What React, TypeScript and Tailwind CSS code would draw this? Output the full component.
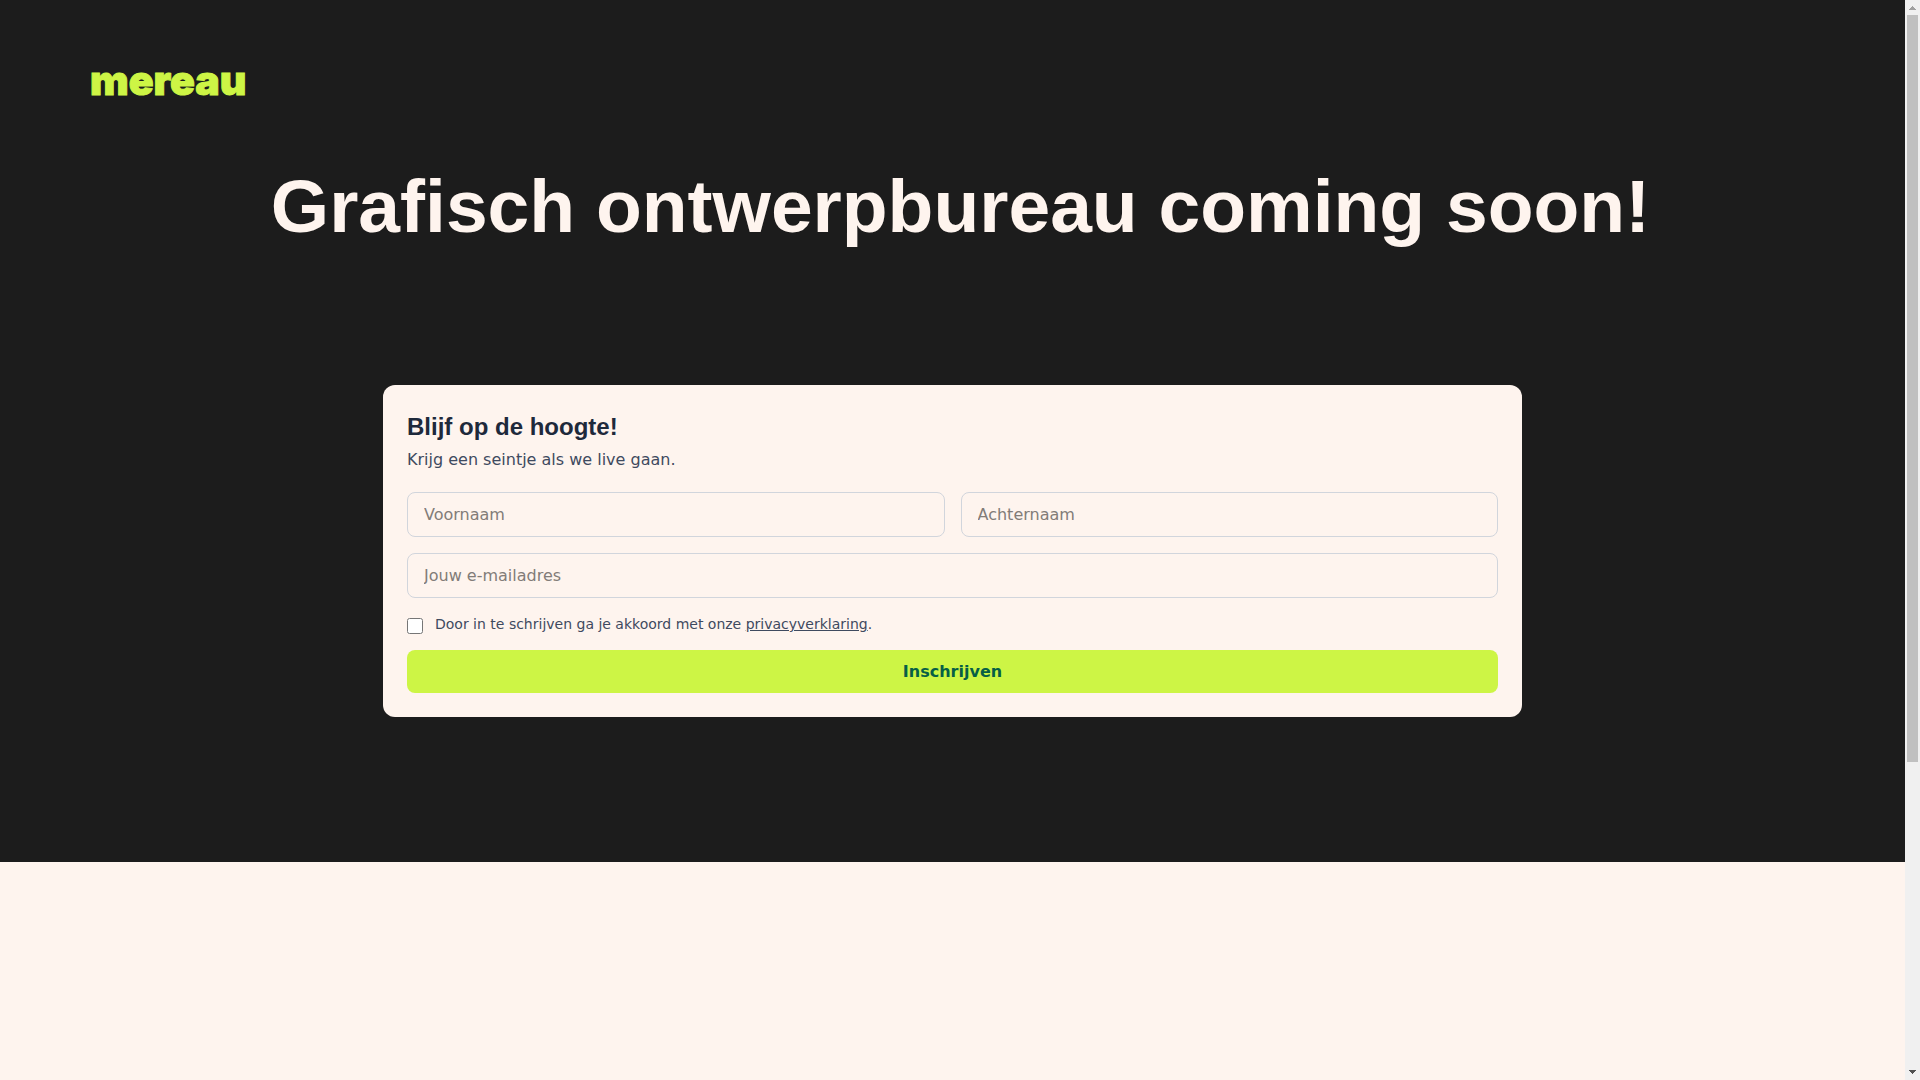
import type { InputHTMLAttributes } from "react";
import clsx from "clsx";

const TextField = ({
	label,
	className,
	...props
}: InputHTMLAttributes<HTMLInputElement> & { label: string }) => {
	return (
		<input
			{...props}
			aria-label={label}
			placeholder={label}
			className={clsx(
				"block h-[45px] w-full rounded-lg border border-gray-300 bg-transparent px-4 text-base text-gray-800 placeholder:text-[#827c78]",
				className,
			)}
		/>
	);
};

const SignupForm = () => {
	return (
		<form
			className="rounded-xl bg-[#fef4ee] p-6"
			onSubmit={(event) => event.preventDefault()}
		>
			<h2 className="font-['Liberation_Sans',sans-serif] text-2xl leading-[35px] font-bold text-[#1e293b]">
				Blijf op de hoogte!
			</h2>
			<p className="mt-1 text-base text-[#3f4a5f]">
				Krijg een seintje als we live gaan.
			</p>

			<div className="mt-5 grid grid-cols-2 gap-4">
				<TextField label="Voornaam" name="firstName" />
				<TextField label="Achternaam" name="lastName" />
				<TextField
					label="Jouw e-mailadres"
					name="email"
					type="email"
					className="col-span-2"
				/>
			</div>

			<div className="mt-4 flex items-start gap-3 text-sm text-[#3f4a5f]">
				<input id="privacy" type="checkbox" className="mt-1 size-4" />
				<label htmlFor="privacy">
					Door in te schrijven ga je akkoord met onze{" "}
					<a href="#privacy" className="underline">
						privacyverklaring
					</a>
					.
				</label>
			</div>

			<button
				type="submit"
				className="mt-4 h-[43px] w-full rounded-lg bg-[#cdf545] text-base font-bold text-[#065f46]"
			>
				Inschrijven
			</button>
		</form>
	);
};

const Scrollbar = () => {
	return (
		<div
			aria-hidden="true"
			className="sticky top-0 flex h-screen w-[15px] shrink-0 flex-col items-center bg-[#f0f0f0]"
		>
			<svg viewBox="0 0 15 15" className="size-[15px] shrink-0" shapeRendering="crispEdges">
				<path d="M7 6h1v1h1v1h1v1h1v1H4V9h1V8h1V7h1z" fill="#a0a0a0" />
			</svg>
			<div className="w-[11px] flex-[747] bg-[#c0c0c0]" />
			<div className="flex-[303]" />
			<svg viewBox="0 0 15 15" className="size-[15px] shrink-0" shapeRendering="crispEdges">
				<path d="M4 5h7v1h-1v1H9v1H8v1H7V8H6V7H5V6H4z" fill="#505050" />
			</svg>
		</div>
	);
};

const App = () => {
	return (
		<div className="flex min-h-screen bg-[#fef4ee] font-['DejaVu_Sans',sans-serif]">
			<div className="min-w-0 flex-1">
				<main className="bg-[#1c1c1c] pb-[145px]">
					<header className="px-[90px] pt-14">
						<a
							href="/"
							className="inline-block font-['Inter',sans-serif] text-[41px] leading-[48px] font-black text-[#cdf545] [-webkit-text-stroke:1px_#cdf545]"
						>
							mereau
						</a>
					</header>
					<h1 className="mt-[62px] pl-4 text-center font-['Liberation_Sans',sans-serif] text-[75px] leading-[80px] font-bold text-[#fef4ee]">
						Grafisch ontwerpbureau coming soon!
					</h1>
					<div className="mx-auto mt-[139px] max-w-[1139px]">
						<SignupForm />
					</div>
				</main>
			</div>
			<Scrollbar />
		</div>
	);
};

export default App;
